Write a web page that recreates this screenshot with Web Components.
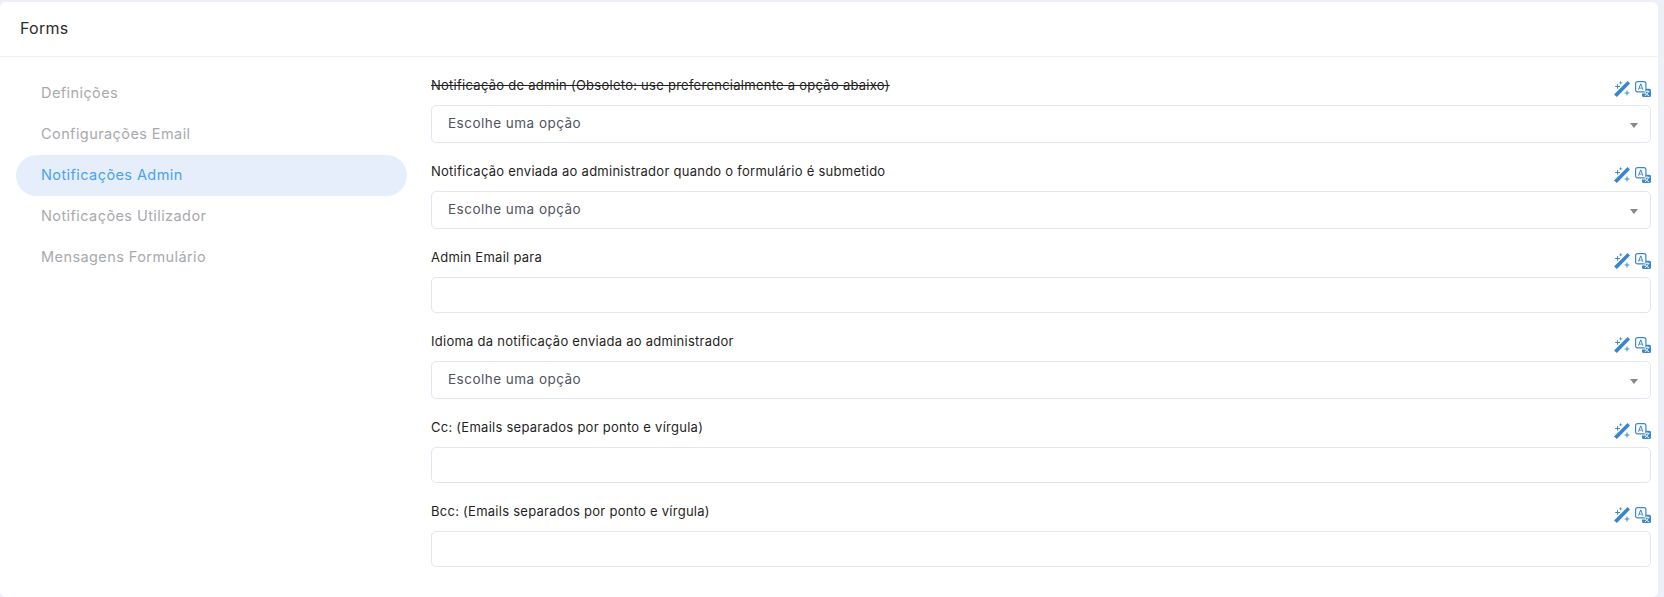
<!DOCTYPE html>
<html lang="pt">
<head>
<meta charset="utf-8">
<title>Forms</title>
<style>
  html, body { margin: 0; height: 100%; background: #eef0f8; }
  body { font-family: "Inter", "Noto Sans", sans-serif; overflow: hidden; }
</style>
</head>
<body>
<forms-card>
  <side-nav slot="nav">
    <nav-item>Definições</nav-item>
    <nav-item>Configurações Email</nav-item>
    <nav-item active>Notificações Admin</nav-item>
    <nav-item>Notificações Utilizador</nav-item>
    <nav-item>Mensagens Formulário</nav-item>
  </side-nav>
  <form-field label="Notificação de admin (Obsoleto: use preferencialmente a opção abaixo)" type="select" strike></form-field>
  <form-field label="Notificação enviada ao administrador quando o formulário é submetido" type="select"></form-field>
  <form-field label="Admin Email para"></form-field>
  <form-field label="Idioma da notificação enviada ao administrador" type="select"></form-field>
  <form-field label="Cc: (Emails separados por ponto e vírgula)"></form-field>
  <form-field label="Bcc: (Emails separados por ponto e vírgula)"></form-field>
</forms-card>

<script>
class FormsCard extends HTMLElement {
  constructor() {
    super();
    this.attachShadow({ mode: "open" });
    this.shadowRoot.innerHTML = `
      <style>
        :host { display: block; margin: 2px 6px 0 0; height: 595px; background: #fff; border-radius: 6px; }
        .head { padding-left: 20px; padding-bottom: 3px; box-sizing: border-box; height: 55px; display: flex; align-items: center; border-bottom: 1px solid #eff2f9; font-size: 16px; font-weight: 400; letter-spacing: .25px; color: #2b2b2b; }
        .body { display: flex; }
        .nav { width: 391px; margin-left: 16px; flex: none; padding-top: 16px; }
        .main { flex: 1; margin-left: 24px; margin-right: 7px; padding-top: 12px; }
      </style>
      <div class="head">Forms</div>
      <div class="body">
        <div class="nav"><slot name="nav"></slot></div>
        <div class="main"><slot></slot></div>
      </div>
    `;
  }
}

class SideNav extends HTMLElement {
  constructor() {
    super();
    this.attachShadow({ mode: "open" });
    this.shadowRoot.innerHTML = `
      <style>:host { display: flex; flex-direction: column; }</style>
      <slot></slot>
    `;
  }
}

class NavItem extends HTMLElement {
  constructor() {
    super();
    this.attachShadow({ mode: "open" });
    this.shadowRoot.innerHTML = `
      <style>
        :host { display: block; height: 41px; line-height: 40px; padding-left: 25px; border-radius: 21px; font-size: 14.5px; letter-spacing: .42px; color: #a9a9ad; }
        :host([active]) { background: #e6eefb; color: #4aa3ef; }
      </style>
      <slot></slot>
    `;
  }
}

class FormField extends HTMLElement {
  constructor() {
    super();
    this.attachShadow({ mode: "open" });
    const isSelect = this.getAttribute("type") === "select";
    this.shadowRoot.innerHTML = `
      <style>
        :host { display: block; padding-bottom: 12px; }
        .top { display: flex; align-items: flex-start; justify-content: space-between; height: 36px; }
        label { font-size: 13px; line-height: 18px; letter-spacing: .26px; color: #1f1f24; margin-top: 7px; }
        :host([strike]) label { text-decoration: line-through; }
        .icons { display: flex; gap: 5px; margin-top: 12px; }
        .box { box-sizing: border-box; height: 36px; border: 1px solid #e2e6f2; border-radius: 5px; background: #fff; display: flex; align-items: center; justify-content: space-between; padding: 0 12px 0 16px; font-size: 13.5px; letter-spacing: .48px; color: #50545f; }
        .box span { margin-top: -3px; }
        .box.select { height: 38px; }
        .caret { width: 0; height: 0; border: 4px solid transparent; border-top: 5px solid #888; border-bottom: 0; margin-top: 3px; }
        svg { display: block; }
      </style>
      <div class="top">
        <label></label>
        <div class="icons">
          <svg width="16" height="16" viewBox="0 0 16 16" fill="#3a86cc">
            <path d="M13.600 0L16 2.400 2.900 16 0 13.400z"/>
            <path d="M3.100 3h1v1.900H6v1H4.100v1.900h-1V5.900H1.200v-1h1.900zM6.300 .3h.8v1.100h1.100v.8H7.100v1.100h-.8V2.200H5.200v-.8h1.100zM12.500 9.600h1v1.900h1.900v1h-1.900v1.900h-1v-1.900h-1.900v-1h1.900z"/>
          </svg>
          <svg width="16" height="16" viewBox="0 0 16 16">
            <rect x=".6" y=".6" width="10.300" height="10.300" rx="2" fill="#fff" stroke="#3a86cc" stroke-width="1.200"/>
            <path d="M5.200 2.700h1.100L8.400 8.800h-1L7 7.500H4.500L4 8.800H3zM4.800 6.700h1.900l-.9-2.700z" fill="#3a86cc"/>
            <path d="M8 7.800h6.500A1.500 1.500 0 0 1 16 9.300V14.500a1.500 1.500 0 0 1-1.500 1.500H8.500A1.500 1.500 0 0 1 7 14.500V12.500h4V7.800z" fill="#3a86cc"/>
            <path d="M9.500 10.300h5M12 9.300v1M13.500 10.300c-.5 2-1.900 3.500-3.600 4.500M10.600 12c.8 1.300 2 2.300 3.500 2.900" stroke="#fff" stroke-width=".9" fill="none"/>
          </svg>
        </div>
      </div>
      <div class="box ${isSelect ? "select" : ""}">
        ${isSelect ? '<span>Escolhe uma opção</span><i class="caret"></i>' : ""}
      </div>
    `;
    this.shadowRoot.querySelector("label").textContent = this.getAttribute("label");
  }
}

customElements.define("forms-card", FormsCard);
customElements.define("side-nav", SideNav);
customElements.define("nav-item", NavItem);
customElements.define("form-field", FormField);
</script>
</body>
</html>
